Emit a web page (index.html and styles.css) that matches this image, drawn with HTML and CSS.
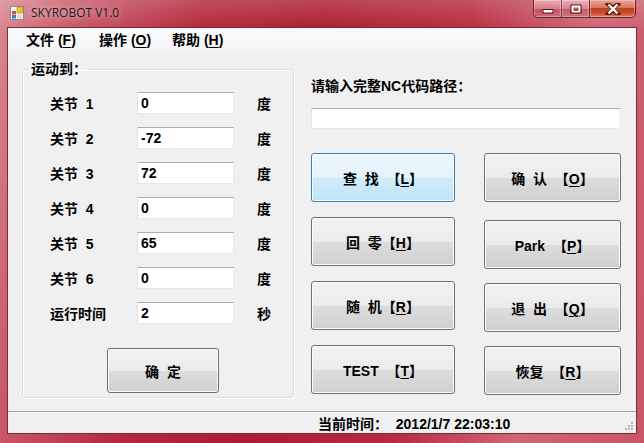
FILE: index.html
```html
<!doctype html>
<html lang="zh-CN">
<head>
  <meta charset="UTF-8">
  <title>SKYROBOT V1.0</title>
  <link rel="stylesheet" href="styles.css">
</head>
<body>

  <div class="window">
    <div class="titlebar">
      <svg class="app-icon" width="14" height="14" viewBox="0 0 14 14">
        <rect x="0.5" y="0.5" width="13" height="13" fill="#f4f4f4" stroke="#8a8a8a"/>
        <rect x="7" y="1.5" width="5.5" height="5.5" fill="#f7c21b" stroke="#b78a00" stroke-width="0.6"/>
        <rect x="2" y="5" width="4" height="3.5" fill="#e0522a"/>
        <rect x="2" y="9" width="4" height="3.5" fill="#3d7bd8"/>
        <rect x="7" y="8.5" width="5" height="4" fill="#d9d9d9"/>
      </svg>
      <span class="title">SKYROBOT V1.0</span>
      <div class="caption">
        <div class="cap-group">
          <div class="cap cap-min">
            <svg width="12" height="6" viewBox="0 0 12 6"><rect x="1" y="1.5" width="10" height="3.5" fill="#fff" stroke="#4a1a20" stroke-width="1"/></svg>
          </div>
          <div class="cap cap-max">
            <svg width="12" height="10" viewBox="0 0 12 10"><rect x="1" y="1" width="10" height="8" fill="none" stroke="#4a1a20" stroke-width="1"/><rect x="2.5" y="2.5" width="7" height="5" fill="none" stroke="#fff" stroke-width="1.6"/><rect x="4" y="4.5" width="4" height="2" fill="#9a3a46"/></svg>
          </div>
        </div>
        <div class="cap cap-close">
          <svg width="16" height="12" viewBox="0 0 16 12"><path d="M3 1 L8 5 L13 1 M3 11 L8 7 L13 11 M8 5 L8 7" stroke="#5a1a10" stroke-width="4.4" fill="none" stroke-linecap="square"/><path d="M3.5 1.5 L12.5 10.5 M12.5 1.5 L3.5 10.5" stroke="#fff" stroke-width="2.4" fill="none"/></svg>
        </div>
      </div>
    </div>

    <div class="client">
      <div class="menubar">
        <span class="menu-item">文件 (<u>F</u>)</span>
        <span class="menu-item">操作 (<u>O</u>)</span>
        <span class="menu-item">帮助 (<u>H</u>)</span>
      </div>

      <div class="main">
        <fieldset class="group">
          <legend>运动到：</legend>
          <div class="joints">
            <label>关节&nbsp; 1</label><input class="field" type="text" value="0"><span class="unit">度</span>
            <label>关节&nbsp; 2</label><input class="field" type="text" value="-72"><span class="unit">度</span>
            <label>关节&nbsp; 3</label><input class="field" type="text" value="72"><span class="unit">度</span>
            <label>关节&nbsp; 4</label><input class="field" type="text" value="0"><span class="unit">度</span>
            <label>关节&nbsp; 5</label><input class="field" type="text" value="65"><span class="unit">度</span>
            <label>关节&nbsp; 6</label><input class="field" type="text" value="0"><span class="unit">度</span>
            <label>运行时间</label><input class="field" type="text" value="2"><span class="unit">秒</span>
          </div>
          <button class="btn btn-ok">确&nbsp; 定</button>
        </fieldset>

        <div class="right">
          <div class="path-label">请输入完整NC代码路径：</div>
          <input class="field path-input" type="text" value="">
          <div class="btn-cols">
            <div class="col col-left">
              <button class="btn btn-focus">查&nbsp; 找&nbsp; 【<u>L</u>】</button>
              <button class="btn">回&nbsp; 零【<u>H</u>】</button>
              <button class="btn">随&nbsp; 机【<u>R</u>】</button>
              <button class="btn">TEST&nbsp; 【<u>T</u>】</button>
            </div>
            <div class="col col-right">
              <button class="btn">确&nbsp; 认&nbsp; 【<u>O</u>】</button>
              <button class="btn btn-park">Park&nbsp; 【<u>P</u>】</button>
              <button class="btn">退&nbsp; 出&nbsp; 【<u>Q</u>】</button>
              <button class="btn">恢复&nbsp; 【<u>R</u>】</button>
            </div>
          </div>
        </div>
      </div>

      <div class="statusbar">
        <span class="status-text">当前时间：&nbsp; 2012/1/7 22:03:10</span>
        <svg class="grip" width="10" height="10" viewBox="0 0 10 10">
          <g fill="#b8b8b8">
            <rect x="7" y="1" width="2" height="2"/>
            <rect x="4" y="4" width="2" height="2"/><rect x="7" y="4" width="2" height="2"/>
            <rect x="1" y="7" width="2" height="2"/><rect x="4" y="7" width="2" height="2"/><rect x="7" y="7" width="2" height="2"/>
          </g>
        </svg>
      </div>
    </div>
  </div>

</body>
</html>
```

FILE: styles.css
```css
html, body {
  margin: 0;
  height: 100%;
}
body {
  background: #b42236;
}
.window {
  display: flex;
  flex-direction: column;
  width: 644px;
  height: 443px;
  background:
    linear-gradient(180deg, rgba(255,255,255,0.18) 0, rgba(255,255,255,0) 30px),
    linear-gradient(100deg, #d98893 0%, #c9596a 10%, #b3273b 28%, #ad1c30 45%, #b72a3f 65%, #cf6674 82%, #c75666 100%);
}

/* title bar */
.titlebar {
  display: flex;
  align-items: flex-start;
  height: 27px;
  padding-left: 10px;
}
.app-icon {
  margin-top: 6px;
}
.title {
  margin: 4px 0 0 7px;
  font: 12px "Open Sans", "DejaVu Sans", sans-serif;
  color: #1c1c1c;
  text-shadow: 0 0 6px rgba(255,255,255,0.7);
}
.caption {
  display: flex;
  margin-left: auto;
  margin-right: 8px;
}
.cap-group {
  display: flex;
  border: 1px solid rgba(70,10,20,0.7);
  border-top: 0;
  border-right: 0;
  border-radius: 0 0 0 5px;
  overflow: hidden;
}
.cap {
  display: flex;
  align-items: center;
  justify-content: center;
  height: 17px;
}
.cap-min,
.cap-max {
  width: 27px;
  background: linear-gradient(180deg, rgba(255,220,225,0.55) 0, rgba(230,150,160,0.45) 50%, rgba(180,60,75,0.5) 51%, rgba(210,120,130,0.5) 100%);
  box-shadow: inset 0 0 0 1px rgba(255,255,255,0.3);
}
.cap-min {
  align-items: flex-end;
  padding-bottom: 3px;
  height: 14px;
}
.cap-max {
  border-left: 1px solid rgba(70,10,20,0.6);
}
.cap-close {
  width: 45px;
  border: 1px solid rgba(70,10,20,0.8);
  border-top: 0;
  border-radius: 0 0 5px 0;
  background: linear-gradient(180deg, #e8a496 0, #d77766 45%, #c2401f 50%, #c74a2e 75%, #e0806a 100%);
  box-shadow: inset 0 0 0 1px rgba(255,220,210,0.4);
}

/* client area */
.client {
  display: flex;
  flex-direction: column;
  flex: 1;
  margin: 0 7px 9px 7px;
  border: 1px solid #7a2b36;
  background: #f0f0f0;
  font: bold 14px "Liberation Sans", "Noto Sans CJK SC", sans-serif;
  color: #000;
}
.menubar {
  display: flex;
  height: 24px;
  padding-left: 18px;
  line-height: 24px;
  background: linear-gradient(180deg, #fbfbfc 0, #f3f4f6 100%);
}
.menu-item {
  width: 73px;
}
u {
  text-decoration-thickness: 1px;
  text-underline-offset: 2px;
}

.main {
  display: flex;
  flex: 1;
}

/* group box */
.group {
  box-sizing: border-box;
  width: 272px;
  height: 338px;
  margin: 8px 0 0 14px;
  padding: 14px 0 0 27px;
  border: 1px solid #d5dfe5;
  border-radius: 3px;
  box-shadow: inset 1px 1px 0 #fff, 1px 1px 0 #fff;
}
.group legend {
  margin-left: -21px;
  padding: 0 2px;
  line-height: 18px;
}
.joints {
  display: grid;
  grid-template-columns: 87px 97px auto;
  grid-auto-rows: 22px;
  row-gap: 13px;
  column-gap: 0;
  align-items: center;
}
.unit {
  margin-left: 23px;
}
.field {
  box-sizing: border-box;
  height: 22px;
  margin: 0;
  padding: 0 3px;
  border: 1px solid #e3e9ef;
  border-top-color: #abadb3;
  border-left-color: #e2e3ea;
  background: #fff;
  font: inherit;
  color: #000;
  outline: 0;
}

/* buttons */
.btn {
  box-sizing: border-box;
  height: 49px;
  margin: 0;
  padding: 0;
  border: 1px solid #707070;
  border-radius: 3px;
  background: linear-gradient(180deg, #f2f2f2 0, #ebebeb 50%, #dddddd 51%, #cfcfcf 100%);
  box-shadow: inset 0 0 0 1px #fcfcfc;
  font: inherit;
  color: #000;
  white-space: nowrap;
}
.btn-focus {
  border-color: #3c7fb1;
  background: linear-gradient(180deg, #eef8fd 0, #e3f3fc 50%, #d0ecfa 51%, #c1e4f6 100%);
}
.btn-ok {
  width: 112px;
  height: 45px;
  margin: 24px 0 0 57px;
}

/* right side */
.right {
  display: flex;
  flex-direction: column;
  width: 310px;
  margin-left: 17px;
}
.path-label {
  margin-top: 25px;
  line-height: 18px;
}
.path-input {
  width: 310px;
  height: 21px;
  margin-top: 13px;
}
.btn-cols {
  display: flex;
  margin-top: 24px;
}
.col {
  display: flex;
  flex-direction: column;
}
.col-left {
  width: 144px;
  gap: 15px;
}
.col-right {
  width: 137px;
  margin-left: 29px;
  gap: 14px;
}
.btn-park {
  margin-top: 4px;
}

/* status bar */
.statusbar {
  display: flex;
  align-items: center;
  height: 21px;
  padding-left: 310px;
  border-top: 1px solid #a0a0a0;
  box-shadow: inset 0 1px 0 #fff;
}
.grip {
  margin-left: auto;
  margin-right: 2px;
  align-self: flex-end;
  margin-bottom: 2px;
}
```
